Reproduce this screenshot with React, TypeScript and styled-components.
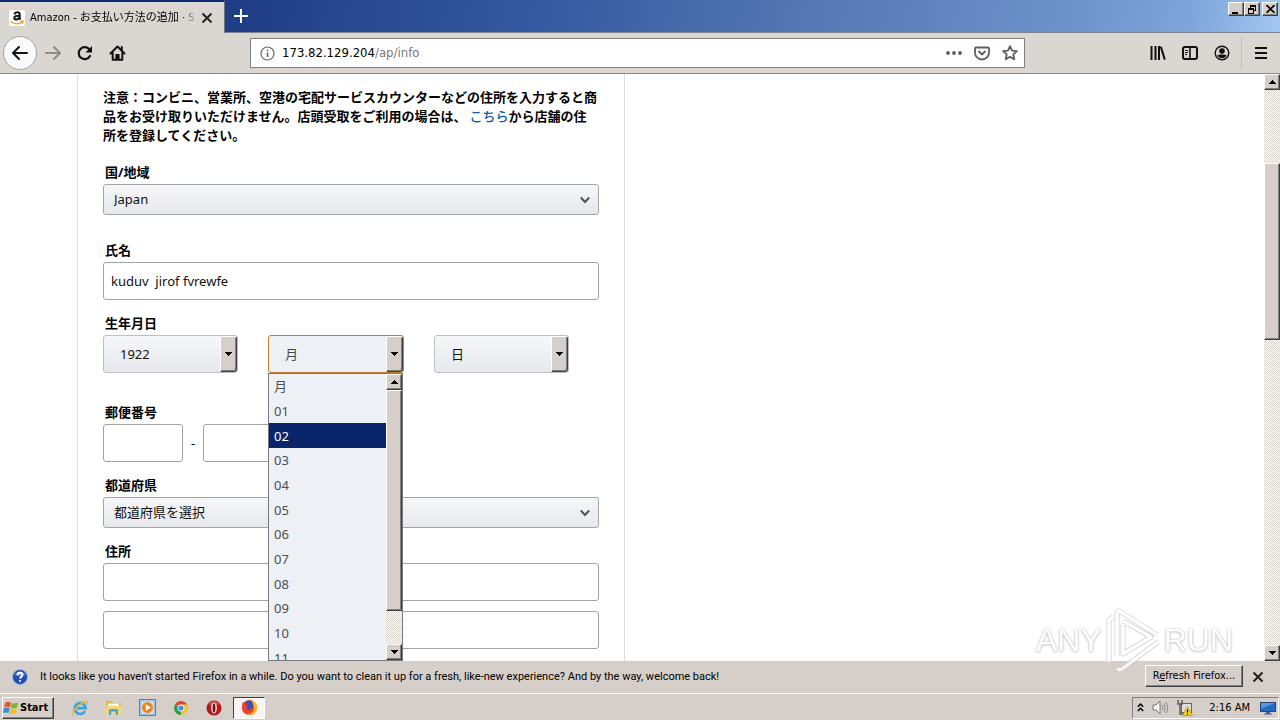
import React from "react";
import styled, { createGlobalStyle, css } from "styled-components";

const uiFont = `"DejaVu Sans Condensed", "Noto Sans CJK JP", sans-serif`;
const pageFont = `"Noto Sans", "Noto Sans CJK JP", sans-serif`;
const face = "#d6cfc9";

const GlobalStyle = createGlobalStyle`
  * { box-sizing: border-box; }
  html, body, #root { height: 100%; }
  body { margin: 0; overflow: hidden; background: #fff; font: 11px/16px ${uiFont}; color: #000; }
  button { font: inherit; color: inherit; padding: 0; border: 0; background: none; }
  svg { display: block; }
`;

const raised = css`
  background: ${face};
  border: 1px solid;
  border-color: #fff #404040 #404040 #fff;
  box-shadow: inset -1px -1px 0 #808080;
`;

const dither = css`
  background: repeating-conic-gradient(#fff 0 25%, #d8d3cb 0 50%) 0 0 / 2px 2px;
`;

const Screen = styled.div`
  position: relative;
  height: 100vh;
  display: flex;
  flex-direction: column;
`;

/* ---------- title bar and tabs ---------- */

const TitleBar = styled.header`
  display: flex;
  height: 33px;
  flex: none;
  background: linear-gradient(100deg, #0c2a72 0, #213f86 20%, #3559a0 42%, #5577b3 63%, #6f93cb 84%, #7fa5da 93%, #a2c8f2 100%);
  border-bottom: 1px solid #7f8590;
`;

const Tab = styled.div`
  width: 225px;
  height: 33px;
  display: flex;
  align-items: center;
  gap: 5px;
  padding: 0 11px 0 9px;
  border-top: 2px solid #0c2a72;
  border-right: 1px solid #70757f;
  background: #dad7d3;
`;

const TabTitle = styled.span`
  flex: 1;
  overflow: hidden;
  white-space: nowrap;
  mask-image: linear-gradient(90deg, #000 150px, transparent 168px);
`;

const IconButton = styled.button<{ $w?: number; $h?: number }>`
  width: ${(p) => p.$w ?? 32}px;
  height: ${(p) => p.$h ?? 32}px;
  flex: none;
  display: flex;
  align-items: center;
  justify-content: center;
`;

const WindowButtons = styled.div`
  margin: 2px 2px 0 auto;
  display: flex;
`;

const WindowButton = styled.button<{ $apart?: boolean }>`
  && { ${raised} }
  width: 16px;
  height: 14px;
  margin-left: ${(p) => (p.$apart ? 2 : 0)}px;
  display: flex;
  align-items: center;
  justify-content: center;
`;

/* ---------- toolbar ---------- */

const Toolbar = styled.nav`
  height: 41px;
  flex: none;
  display: flex;
  align-items: center;
  background: #dad6d1;
  border-bottom: 1px solid #8a8885;
`;

const NavButtons = styled.div`
  display: flex;
  width: 250px;
  padding-left: 3px;
  align-items: center;
`;

const BackButton = styled.button`
  && { border: 1px solid #a9a7a3; background: #fbfafa; }
  width: 34px;
  height: 34px;
  border-radius: 50%;
  display: flex;
  align-items: center;
  justify-content: center;
`;

const AddressBar = styled.div`
  flex: 1;
  height: 30px;
  display: flex;
  align-items: center;
  padding: 0 0 0 9px;
  border: 1px solid #82807d;
  background: #fff;
`;

const Url = styled.a`
  flex: 1;
  margin-left: 7px;
  font-size: 13px;
  line-height: 18px;
  color: #000;
  text-decoration: none;
`;

const UrlPath = styled.span`
  color: #777;
`;

const ToolButtons = styled.div`
  width: 255px;
  display: flex;
  justify-content: flex-end;
  align-items: center;
  padding-right: 3px;
`;

const Separator = styled.span`
  width: 1px;
  height: 32px;
  margin: 0 3px;
  background: #c2beb9;
`;

/* ---------- page ---------- */

const Viewport = styled.main`
  flex: 1;
  min-height: 0;
  display: flex;
  background: #fff;
`;

const Page = styled.div`
  flex: 1;
  overflow: hidden;
  font-family: ${pageFont};
  font-size: 13px;
  line-height: 19px;
`;

const Card = styled.form`
  width: 548px;
  min-height: 100%;
  margin-left: 77px;
  padding: 13px 25px 0;
  border: 1px solid #ddd;
  border-width: 0 1px;
`;

const Notice = styled.p`
  margin: 0 0 19px;
  font-weight: 700;
  font-family: "Noto Sans CJK JP", sans-serif;
`;

const NoticeLink = styled.a`
  color: #0a5cae;
  font-weight: 500;
  text-decoration: none;
`;

const Field = styled.div<{ $after: number }>`
  display: flex;
  flex-direction: column;
  margin-bottom: ${(p) => p.$after}px;
`;

const Label = styled.label`
  padding-left: 2px;
  margin-bottom: 2px;
  font-weight: 700;
`;

const Row = styled.div<{ $gap: number }>`
  display: flex;
  align-items: center;
  gap: ${(p) => p.$gap}px;
`;

const TextBox = styled.input<{ $w?: number; $top?: number }>`
  width: ${(p) => (p.$w ? `${p.$w}px` : "100%")};
  height: 38px;
  margin: ${(p) => p.$top ?? 0}px 0 0;
  padding: 0 7px;
  border: 1px solid #a3a3a3;
  border-radius: 3px;
  background: #fff;
  font: 13px/19px ${pageFont};
  color: #111;
  outline: none;
`;

const SelectBox = styled.div<{ $w?: number }>`
  position: relative;
  display: grid;
  width: ${(p) => (p.$w ? `${p.$w}px` : "100%")};
  > select, > span, > svg { grid-area: 1 / 1; }
  > svg { place-self: center end; margin-right: 8px; pointer-events: none; }
`;

const Select = styled.select<{ $tall?: boolean; $active?: boolean }>`
  appearance: none;
  width: 100%;
  height: ${(p) => (p.$tall ? 38 : 31)}px;
  margin: 0;
  padding: 0 ${(p) => (p.$tall ? 16 : 10)}px;
  border: 1px solid ${(p) => (p.$active ? "#c77c2c" : p.$tall ? "#bcbec1" : "#a2a5a9")};
  border-radius: 3px;
  background: ${(p) => (p.$active ? "#edf1f5" : "linear-gradient(#f5f7f9, #e6e8ec)")};
  font: 13px/19px ${pageFont};
  color: ${(p) => (p.$active ? "#444" : "#111")};
  outline: none;
`;

const DropArrow = styled.span`
  ${raised}
  width: 17px;
  height: 36px;
  place-self: center end;
  margin-right: 1px;
  border-radius: 0 3px 3px 0;
  display: flex;
  align-items: center;
  justify-content: center;
  pointer-events: none;
`;

const Popup = styled.div`
  position: absolute;
  top: 100%;
  left: 0;
  z-index: 2;
  width: 135px;
  height: 288px;
  display: flex;
  overflow: hidden;
  border: 1px solid #77797c;
  background: #edf1f5;
`;

const Options = styled.ul`
  flex: 1;
  height: 296px;
  margin: 0;
  padding: 0;
  list-style: none;
  display: grid;
  grid-auto-rows: 1fr;
  color: #4a4d52;
`;

const Option = styled.li<{ $on?: boolean }>`
  display: flex;
  align-items: center;
  padding: 1px 0 0 5px;
  ${(p) => p.$on && "background: #0a246a; color: #fff;"}
`;

const Scroll = styled.div`
  width: 16px;
  flex: none;
  display: flex;
  flex-direction: column;
  ${dither}
`;

const ScrollButton = styled.button`
  && { ${raised} }
  height: 16px;
  flex: none;
  display: flex;
  align-items: center;
  justify-content: center;
`;

const Thumb = styled.div<{ $part: number }>`
  ${raised}
  flex: ${(p) => p.$part} 1 0;
`;

const Track = styled.div<{ $part: number }>`
  flex: ${(p) => p.$part} 1 0;
`;

/* ---------- notification bar ---------- */

const NoticeBar = styled.section`
  height: 32px;
  flex: none;
  display: flex;
  align-items: center;
  padding: 0 8px 0 12px;
  background: ${face};
`;

const NoticeText = styled.span`
  flex: 1;
  margin-left: 12px;
  white-space: nowrap;
  font-family: Roboto, "Liberation Sans", sans-serif;
`;

const RefreshButton = styled.button`
  && { ${raised} }
  width: 98px;
  height: 22px;
  margin: 0 1px 2px 0;
  white-space: nowrap;
`;

/* ---------- task bar ---------- */

const TaskBar = styled.footer`
  height: 27px;
  flex: none;
  display: flex;
  align-items: center;
  padding: 1px 1px 0 2px;
  border-top: 1px solid #fff;
  background: ${face};
`;

const StartButton = styled.button`
  && { ${raised} }
  width: 52px;
  height: 22px;
  margin-right: 9px;
  display: flex;
  align-items: center;
  gap: 1px;
  font-weight: 700;
`;

const ActiveTask = styled.button`
  && { border: 1px solid; border-color: #404040 #fff #fff #404040; background: #f8f6f5; }
  width: 32px;
  height: 22px;
  margin-left: 2px;
  display: flex;
  align-items: center;
  justify-content: center;
`;

const Tray = styled.div`
  height: 22px;
  margin-left: auto;
  padding: 0 2px 0 4px;
  display: flex;
  align-items: center;
  gap: 8px;
  border: 1px solid;
  border-color: #808080 #fff #fff #808080;
`;

const Clock = styled.time`
  margin: 0 2px 0 8px;
  white-space: nowrap;
`;

/* ---------- watermark ---------- */

const Watermark = styled.div`
  position: absolute;
  right: 47px;
  bottom: 48px;
  z-index: 3;
  height: 64px;
  display: flex;
  align-items: center;
  gap: 3px;
  pointer-events: none;
  opacity: 0.8;
  font: 32px/64px "Liberation Sans", sans-serif;
  color: #fff;
  text-shadow: 0 0 2px #aaa, 0 1px 3px #bbb;
`;

/* ---------- drawings ---------- */

const Arrow = ({ up }: { up?: boolean }) => (
  <svg width="7" height="4" viewBox="0 0 7 4" shapeRendering="crispEdges">
    <path d={up ? "M0 4H7L3.5 0Z" : "M0 0H7L3.5 4Z"} fill="#000" />
  </svg>
);

const Cross = ({ size = 12 }: { size?: number }) => (
  <svg width={size} height={size} viewBox="0 0 12 12" stroke="#222" strokeWidth="2">
    <path d="M1.5 1.5l9 9M10.5 1.5l-9 9" />
  </svg>
);

const Chevron = () => (
  <svg width="12" height="8" viewBox="0 0 12 8" fill="none" stroke="#50555c" strokeWidth="2">
    <path d="M1.8 1.5L6 6l4.200-4.500" />
  </svg>
);

const AmazonIcon = () => (
  <svg width="16" height="16" viewBox="0 0 16 16">
    <rect width="16" height="16" rx="2" fill="#fff" />
    <path d="M5.300 4.300Q6 2.300 8.200 2.300q2.500 0 2.500 2.200V8q0 1 .8 1.700M10.500 5.700q-5.200-.2-5.200 2.100 0 1.600 1.800 1.600 2.600 0 3.400-2.400" fill="none" stroke="#111" strokeWidth="2" />
    <path d="M1.500 11.500c4 3.200 9 3 12 .4M11.500 11.200l2.700-.1-.6 2.500" fill="none" stroke="#f90" strokeWidth="1.300" />
  </svg>
);

const BackIcon = ({ flip, color = "#111" }: { flip?: boolean; color?: string }) => (
  <svg width="18" height="16" viewBox="0 0 18 16" fill="none" stroke={color} strokeWidth="2" strokeLinecap="round" strokeLinejoin="round">
    <path d={flip ? "M2 8h14M10 2l6 6-6 6" : "M16 8H2M8 2L2 8l6 6"} />
  </svg>
);

const ReloadIcon = () => (
  <svg width="16" height="16" viewBox="0 0 16 16" fill="none" stroke="#111" strokeWidth="2.200" strokeLinecap="round">
    <path d="M13 11a6 6 0 1 1-.5-6.500" />
    <path d="M15 1v6.500H8.500Z" fill="#111" stroke="none" />
  </svg>
);

const HomeIcon = () => (
  <svg width="17" height="16" viewBox="0 0 17 16" fill="none" stroke="#111" strokeWidth="2" strokeLinejoin="round" strokeLinecap="round">
    <path d="M1.500 8.500l7-7 7 7M3.700 8v6.800h9.600V8" />
    <path d="M7 14.500V9.500h3v5" fill="#111" strokeWidth="1.200" />
    <path d="M12.800 2v3" />
  </svg>
);

const InfoIcon = () => (
  <svg width="15" height="15" viewBox="0 0 15 15" fill="none" stroke="#666">
    <circle cx="7.500" cy="7.500" r="6.500" strokeWidth="1.200" />
    <path d="M7.500 6.500V11M7.500 3.800v1.500" strokeWidth="1.600" />
  </svg>
);

const DotsIcon = () => (
  <svg width="16" height="4" viewBox="0 0 16 4" fill="#5e5e5e">
    <circle cx="2" cy="2" r="1.900" /><circle cx="8" cy="2" r="1.900" /><circle cx="14" cy="2" r="1.900" />
  </svg>
);

const PocketIcon = () => (
  <svg width="16" height="15" viewBox="0 0 16 15" fill="none" stroke="#5e5e5e" strokeWidth="1.800" strokeLinecap="round" strokeLinejoin="round">
    <path d="M2 1.500h12q1 0 1 1V6.500a7 7 0 0 1-14 0V2.500q0-1 1-1Z" />
    <path d="M5 5.500l3 3 3-3" />
  </svg>
);

const StarIcon = () => (
  <svg width="16" height="16" viewBox="0 0 16 16" fill="none" stroke="#5e5e5e" strokeWidth="1.800" strokeLinejoin="round">
    <path d="M8 1.200l2 4.400 4.900.5-3.600 3.300 1 4.900L8 11.900l-4.300 2.400 1-4.900L1.100 6.100 6 5.600Z" />
  </svg>
);

const LibraryIcon = () => (
  <svg width="16" height="14" viewBox="0 0 16 14" stroke="#111" strokeWidth="2" fill="none">
    <path d="M1.500 0v14M5.500 0v14M9 0v14M10.800 .6l4 13" />
  </svg>
);

const SidebarIcon = () => (
  <svg width="16" height="14" viewBox="0 0 16 14" stroke="#111" fill="none">
    <rect x="1" y="1" width="14" height="12" rx="2" strokeWidth="2" />
    <path d="M8 1v12" strokeWidth="1.600" />
    <path d="M3 4.500h3M3 6.500h3M3 8.500h2" />
  </svg>
);

const AccountIcon = () => (
  <svg width="16" height="16" viewBox="0 0 16 16">
    <circle cx="8" cy="8" r="6.800" fill="none" stroke="#111" strokeWidth="1.400" />
    <circle cx="8" cy="6" r="2.800" fill="#111" />
    <path d="M3.300 10.500q1.500-1 3-1h3.400q1.500 0 3 1A5.600 5.600 0 0 1 3.300 10.500Z" fill="#111" />
  </svg>
);

const MenuIcon = () => (
  <svg width="12" height="12" viewBox="0 0 12 12" stroke="#111" strokeWidth="2">
    <path d="M0 1h12M0 6h12M0 11h12" />
  </svg>
);

const HelpIcon = () => (
  <svg width="16" height="16" viewBox="0 0 16 16">
    <circle cx="8" cy="8" r="7.500" fill="#1d4fb4" stroke="#9db4dd" />
    <path d="M2.500 6a6 6 0 0 1 11 0q-5 2-11 0Z" fill="#7fa3e6" opacity=".7" />
    <path d="M5.600 6.200C5.600 2.800 10.500 3 10.400 6c0 1.600-2.200 1.800-2.300 3.600M8.100 11v1.800" fill="none" stroke="#fff" strokeWidth="1.900" />
  </svg>
);

const WindowsFlag = () => (
  <svg width="16" height="16" viewBox="0 0 16 16">
    <path d="M2.500 2.500q3-1.500 5.500.2L7 7.500Q4 6 1 7.200Z" fill="#e8592a" />
    <path d="M8.800 3q3 1.300 6.500-.5L14 7.500q-3 1.600-6.200.4Z" fill="#7db72f" />
    <path d="M.8 8.200q3-1.400 6 .2L5.600 13Q3 11.800 0 13Z" fill="#3b8fd8" />
    <path d="M7.500 8.900q3 1.200 6.300-.4L12.500 13.300q-3 1.500-6.200.2Z" fill="#f5bd22" />
  </svg>
);

const ExplorerE = () => (
  <svg width="18" height="18" viewBox="0 0 18 18" fill="none">
    <path d="M14 12.200a5.500 5.500 0 1 1 .7-3H6" stroke="#36a3df" strokeWidth="2.700" />
    <path d="M2.500 16.500C-.5 13 9 3.500 15 2.500q2.500 0 1 3.200" stroke="#e2b943" strokeWidth="1.400" />
  </svg>
);

const FolderIcon = () => (
  <svg width="18" height="17" viewBox="0 0 18 17">
    <path d="M1 2h6l1.500 2H16v11H1Z" fill="#e3b94c" />
    <path d="M3 4.500h11V8H3Z" fill="#fdf8df" />
    <path d="M1 7h15.500v8.500H1Z" fill="#f3d678" />
    <path d="M4 16v-4.500q0-1.500 1.500-1.500h6q1.500 0 1.500 1.500V16h-2.200v-3.500H6.200V16Z" fill="#4aa6d6" />
  </svg>
);

const MediaIcon = () => (
  <svg width="17" height="17" viewBox="0 0 17 17">
    <rect x=".5" y=".5" width="16" height="16" fill="#9dc4e6" stroke="#4d83b7" />
    <rect x="2.500" y="2.500" width="12" height="12" fill="#d6e8f6" />
    <circle cx="8.500" cy="8.500" r="5.500" fill="#f0851b" />
    <path d="M6.800 5.300v6.400l5-3.200Z" fill="#fff" />
  </svg>
);

const ChromeIcon = () => (
  <svg width="16" height="16" viewBox="0 0 16 16">
    <circle cx="8" cy="8" r="7" fill="#f5c524" />
    <path d="M8 8L1.940 4.500A7 7 0 0 1 14.060 4.500Z" fill="#e04434" />
    <path d="M8 8L1.940 4.500A7 7 0 0 0 8 15Z" fill="#2e9e4f" />
    <path d="M8 4.500h6.100a7 7 0 0 1 .9 3.500l-4 1Z" fill="#f5c524" />
    <circle cx="8" cy="8" r="3.400" fill="#fff" />
    <circle cx="8" cy="8" r="2.600" fill="#4486ea" />
  </svg>
);

const OperaIcon = () => (
  <svg width="16" height="16" viewBox="0 0 16 16">
    <circle cx="8" cy="8" r="7.500" fill="#b3161b" />
    <path d="M2.500 4a7 7 0 0 1 11 0L8 6Z" fill="#d8534e" />
    <ellipse cx="8" cy="8" rx="2.800" ry="5.500" fill="#fff" />
    <ellipse cx="8" cy="8" rx="1.500" ry="4.800" fill="#77100f" />
  </svg>
);

const FirefoxIcon = () => (
  <svg width="17" height="17" viewBox="0 0 17 17">
    <circle cx="8.500" cy="8.500" r="7.500" fill="#f46b22" />
    <circle cx="8" cy="6.500" r="5" fill="#3c50b8" />
    <path d="M1.200 5L2.500 2.500l1.200 2 2 .3-.6 2 1.900 1-1.800 1.400q1.500 2.300 4.800.9 2.500-1.500 1.500-4.500Q16 7 15.500 11a7.500 7.500 0 0 1-14.500-2Z" fill="#f0402b" />
    <path d="M10 .8q6 2 6 7.700a7.500 7.500 0 0 1-11 6.600q8 .4 8-6.100 0-3-3-8.200Z" fill="#fcb827" />
  </svg>
);

const UpChevrons = () => (
  <svg width="7" height="9" viewBox="0 0 7 9" fill="none" stroke="#000" strokeWidth="1.400">
    <path d="M.8 3.700L3.500 1l2.700 2.700M.8 8L3.500 5.300 6.200 8" />
  </svg>
);

const SpeakerIcon = () => (
  <svg width="17" height="15" viewBox="0 0 17 15">
    <path d="M1 5h3l4-4v13l-4-4H1Z" fill="#fafafa" stroke="#777" />
    <path d="M10 5q1.500 2.500 0 5M12 3.500q2.600 4 0 8M14 2q3.600 5.500 0 11" fill="none" stroke="#858585" />
  </svg>
);

const NetworkIcon = () => (
  <svg width="16" height="16" viewBox="0 0 16 16">
    <rect x="4.500" y="3.500" width="10" height="9" fill="#dedede" stroke="#666" />
    <path d="M1 0v4h4V0M3 4v10h4" fill="none" stroke="#555" strokeWidth="1.400" />
    <path d="M10.500 6.500l5 9h-10Z" fill="#f7d51f" stroke="#b39000" strokeWidth=".7" />
    <path d="M10.500 9.500v3M10.500 13.500v1" stroke="#000" strokeWidth="1.200" />
  </svg>
);

const MonitorIcon = () => (
  <svg width="16" height="15" viewBox="0 0 16 15">
    <rect x=".5" y="2.500" width="15" height="9" fill="#2369c5" stroke="#274774" />
    <path d="M1 3h14L1 8.500Z" fill="#5798e2" />
    <path d="M6 12h4v1.500h2v1H4v-1h2Z" fill="#47638b" />
  </svg>
);

const markLines = "M12 48V5q0-3 3-1.500L52 27M18 16v30l28-17L18 13M13 60q0 3 4 1L53 34M4 54V14q0-3 4-5";

const PlayMark = () => (
  <svg width="56" height="64" viewBox="0 0 56 64" fill="none" strokeLinejoin="round">
    <path d={markLines} stroke="#c6c6c6" strokeWidth="5" />
    <path d={markLines} stroke="#fff" strokeWidth="3.400" />
  </svg>
);

const months = ["月", "01", "02", "03", "04", "05", "06", "07", "08", "09", "10", "11"];

export default function App() {
  return (
    <Screen>
      <GlobalStyle />
      <TitleBar>
        <Tab>
          <AmazonIcon />
          <TabTitle lang="ja">Amazon - お支払い方法の追加 · S</TabTitle>
          <IconButton $w={12} $h={16} aria-label="Close tab"><Cross size={12} /></IconButton>
        </Tab>
        <IconButton aria-label="New tab">
          <svg width="14" height="14" viewBox="0 0 14 14" stroke="#fff" strokeWidth="2"><path d="M7 0v14M0 7h14" /></svg>
        </IconButton>
        <WindowButtons>
          <WindowButton aria-label="Minimize">
            <svg width="10" height="9" viewBox="0 0 10 9"><path d="M1 7h6v2H1Z" /></svg>
          </WindowButton>
          <WindowButton aria-label="Restore">
            <svg width="10" height="9" viewBox="0 0 10 9" fill="none" stroke="#000" shapeRendering="crispEdges">
              <path d="M3.500 3V.5h5v5H7M3 1.500h6M1.500 3.500h5v5h-5ZM1 4.500h6" />
            </svg>
          </WindowButton>
          <WindowButton $apart aria-label="Close">
            <svg width="9" height="8" viewBox="0 0 9 8" stroke="#000" strokeWidth="1.600"><path d="M.5 0l8 8M8.500 0l-8 8" /></svg>
          </WindowButton>
        </WindowButtons>
      </TitleBar>

      <Toolbar>
        <NavButtons>
          <BackButton aria-label="Back"><BackIcon /></BackButton>
          <IconButton aria-label="Forward"><BackIcon flip color="#8e8c89" /></IconButton>
          <IconButton aria-label="Reload"><ReloadIcon /></IconButton>
          <IconButton aria-label="Home"><HomeIcon /></IconButton>
        </NavButtons>
        <AddressBar>
          <InfoIcon />
          <Url href="#">173.82.129.204<UrlPath>/ap/info</UrlPath></Url>
          <IconButton $w={28} $h={28} aria-label="Page actions"><DotsIcon /></IconButton>
          <IconButton $w={28} $h={28} aria-label="Save to Pocket"><PocketIcon /></IconButton>
          <IconButton $w={28} $h={28} aria-label="Bookmark"><StarIcon /></IconButton>
        </AddressBar>
        <ToolButtons>
          <IconButton aria-label="Library"><LibraryIcon /></IconButton>
          <IconButton aria-label="Sidebars"><SidebarIcon /></IconButton>
          <IconButton aria-label="Account"><AccountIcon /></IconButton>
          <Separator />
          <IconButton aria-label="Menu"><MenuIcon /></IconButton>
        </ToolButtons>
      </Toolbar>

      <Viewport>
        <Page lang="ja">
          <Card>
            <Notice>
              注意：コンビニ、営業所、空港の宅配サービスカウンターなどの住所を入力すると商品をお受け取りいただけません。店頭受取をご利用の場合は、 <NoticeLink href="#">こちら</NoticeLink>から店舗の住所を登録してください。
            </Notice>
            <Field $after={26}>
              <Label htmlFor="country">国/地域</Label>
              <SelectBox>
                <Select id="country"><option>Japan</option></Select>
                <Chevron />
              </SelectBox>
            </Field>
            <Field $after={14}>
              <Label htmlFor="name">氏名</Label>
              <TextBox id="name" defaultValue="kuduv  jirof fvrewfe" />
            </Field>
            <Field $after={30}>
              <Label htmlFor="year">生年月日</Label>
              <Row $gap={30}>
                <SelectBox $w={135}>
                  <Select $tall id="year"><option>1922</option></Select>
                  <DropArrow><Arrow /></DropArrow>
                </SelectBox>
                <SelectBox $w={136}>
                  <Select $tall $active aria-label="月"><option>月</option></Select>
                  <DropArrow><Arrow /></DropArrow>
                  <Popup>
                    <Options role="listbox" aria-label="月">
                      {months.map((m) => (
                        <Option key={m} role="option" aria-selected={m === "02"} $on={m === "02"}>{m}</Option>
                      ))}
                    </Options>
                    <Scroll>
                      <ScrollButton type="button" aria-label="Up"><Arrow up /></ScrollButton>
                      <Thumb $part={221} />
                      <Track $part={33} />
                      <ScrollButton type="button" aria-label="Down"><Arrow /></ScrollButton>
                    </Scroll>
                  </Popup>
                </SelectBox>
                <SelectBox $w={135}>
                  <Select $tall aria-label="日"><option>日</option></Select>
                  <DropArrow><Arrow /></DropArrow>
                </SelectBox>
              </Row>
            </Field>
            <Field $after={14}>
              <Label htmlFor="zip">郵便番号</Label>
              <Row $gap={8}>
                <TextBox id="zip" $w={80} />
                -
                <TextBox $w={110} aria-label="郵便番号" />
              </Row>
            </Field>
            <Field $after={14}>
              <Label htmlFor="pref">都道府県</Label>
              <SelectBox>
                <Select id="pref"><option>都道府県を選択</option></Select>
                <Chevron />
              </SelectBox>
            </Field>
            <Field $after={0}>
              <Label htmlFor="addr">住所</Label>
              <TextBox id="addr" />
              <TextBox $top={10} aria-label="住所" />
            </Field>
          </Card>
        </Page>
        <Scroll>
          <ScrollButton aria-label="Scroll up"><Arrow up /></ScrollButton>
          <Track $part={73} />
          <Thumb $part={176} />
          <Track $part={306} />
          <ScrollButton aria-label="Scroll down"><Arrow /></ScrollButton>
        </Scroll>
      </Viewport>

      <NoticeBar>
        <HelpIcon />
        <NoticeText>
          It looks like you haven't started Firefox in a while. Do you want to clean it up for a fresh, like-new experience? And by the way, welcome back!
        </NoticeText>
        <RefreshButton>R<u>e</u>fresh Firefox...</RefreshButton>
        <IconButton $w={28} $h={28} aria-label="Dismiss"><Cross size={12} /></IconButton>
      </NoticeBar>

      <TaskBar>
        <StartButton><WindowsFlag />Start</StartButton>
        <IconButton $w={34} $h={22} aria-label="Internet Explorer"><ExplorerE /></IconButton>
        <IconButton $w={33} $h={22} aria-label="Explorer"><FolderIcon /></IconButton>
        <IconButton $w={34} $h={22} aria-label="Media Player"><MediaIcon /></IconButton>
        <IconButton $w={33} $h={22} aria-label="Chrome"><ChromeIcon /></IconButton>
        <IconButton $w={34} $h={22} aria-label="Opera"><OperaIcon /></IconButton>
        <ActiveTask aria-label="Firefox"><FirefoxIcon /></ActiveTask>
        <Tray>
          <UpChevrons />
          <SpeakerIcon />
          <NetworkIcon />
          <Clock>2:16 AM</Clock>
          <MonitorIcon />
        </Tray>
      </TaskBar>

      <Watermark>
        <span>ANY</span>
        <PlayMark />
        <span>RUN</span>
      </Watermark>
    </Screen>
  );
}
